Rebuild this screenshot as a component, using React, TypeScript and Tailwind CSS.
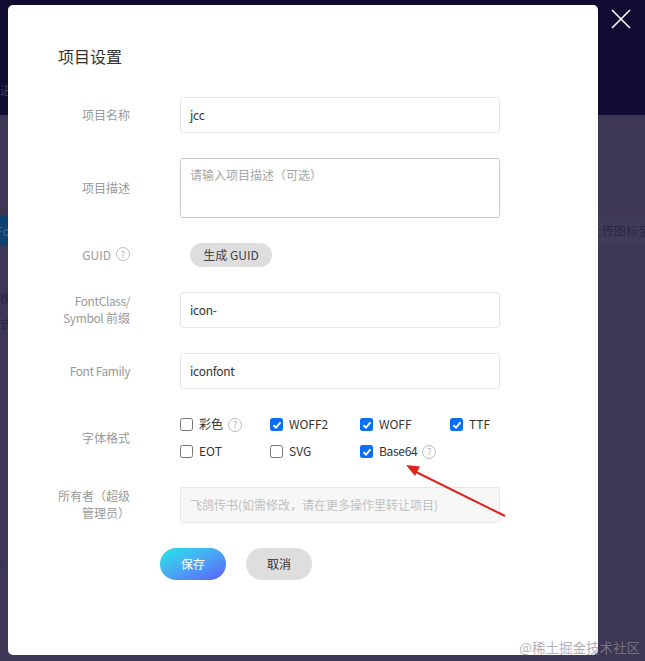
const font = "font-['Noto_Sans_CJK_SC','Noto_Sans',sans-serif]";

function Help() {
  return (
    <span className="inline-flex h-[14px] w-[14px] items-center justify-center rounded-full border border-[#bbbbbb] text-[9px] leading-none text-[#aaaaaa]">
      ?
    </span>
  );
}

function Check({ label, checked, help, tight }: { label: string; checked?: boolean; help?: boolean; tight?: boolean }) {
  return (
    <div className="flex h-[27px] items-center">
      {checked ? (
        <span className="flex h-[13px] w-[13px] items-center justify-center rounded-[2.5px] bg-[#0b6ff5]">
          <svg width="10" height="10" viewBox="0 0 10 10" fill="none">
            <path d="M1.5 5.2 L4 7.6 L8.5 2.4" stroke="#ffffff" strokeWidth="1.9" />
          </svg>
        </span>
      ) : (
        <span className="h-[13px] w-[13px] rounded-[2.5px] border border-[#767676] bg-white" />
      )}
      <span className={`ml-[6px] pb-[2px] text-[12px] text-[#333333] ${tight ? "tracking-[-0.3px]" : ""}`}>{label}</span>
      {help && (
        <span className="ml-[5px] flex">
          <Help />
        </span>
      )}
    </div>
  );
}

function Row({ label, children }: { label: React.ReactNode; children: React.ReactNode }) {
  return (
    <div className="flex items-center">
      <div className="w-[72px] shrink-0 pb-[2px] text-right text-[12px] leading-[17px] text-[#999999]">{label}</div>
      <div className="ml-[50px] w-[320px]">{children}</div>
    </div>
  );
}

function Input({ value }: { value: string }) {
  return (
    <div className="flex h-[36px] items-center rounded-[3px] border border-[#e6e6e6] bg-white px-[9px] text-[12px] tracking-[-0.25px] text-[#333333]">
      {value}
    </div>
  );
}

export default function App() {
  return (
    <div className={`${font} relative h-[661px] w-[645px] overflow-hidden bg-[#3d3755]`}>
      <div className="h-[115px] bg-[#100b30]">
        <div className="pt-[81px] text-[12px] text-[#3f3a5c]">进</div>
      </div>
      <div className="mt-[100px] flex h-[31px] items-center justify-between bg-[#0d4170]">
        <span className="-ml-[4px] text-[12px] text-[#3a6d90]">Fo</span>
        <span className="-mr-[5px] flex h-full items-center bg-[#413b5a] pl-[14px] text-[12px] whitespace-nowrap text-[#2b2644]">
          上传图标至
        </span>
      </div>
      <div className="pt-[39px] text-[12px] leading-[26px] text-[#2b2644]">
        <div>模</div>
        <div>式</div>
        <div className="mt-[214px] -ml-[3px]">&lt;</div>
      </div>

      {/* close */}
      <svg className="absolute left-[611px] top-[9px]" width="20" height="20" viewBox="0 0 20 20" fill="none">
        <path d="M1 1 L19 19 M19 1 L1 19" stroke="#ffffff" strokeWidth="1.6" />
      </svg>

      {/* modal */}
      <div className="absolute left-[8px] top-[5px] flex h-[650px] w-[590px] flex-col rounded-[5px] bg-white pl-[50px] pt-[40px]">
        <h2 className="h-[52px] text-[16px] leading-[23px] font-normal text-[#333333]">项目设置</h2>
        <div className="flex flex-col gap-[25px]">
          <Row label="项目名称">
            <Input value="jcc" />
          </Row>
          <Row label="项目描述">
            <div className="h-[60px] rounded-[3px] border border-[#c8c8c8] bg-white px-[9px] pt-[6px] text-[12px] leading-[20px] text-[#a6a6a6]">
              请输入项目描述（可选）
            </div>
          </Row>
          <Row
            label={
              <span className="flex items-center justify-end gap-[5px]">
                GUID <Help />
              </span>
            }
          >
            <div className="ml-[10px] flex h-[24px] w-[82px] items-center justify-center rounded-full bg-[#dedede] text-[12px] text-[#444444]">
              生成 GUID
            </div>
          </Row>
          <Row
            label={
              <>
                <span className="tracking-[-0.4px]">FontClass/ Symbol</span> 前缀
              </>
            }
          >
            <Input value="icon-" />
          </Row>
          <Row label={<span className="tracking-[-0.45px]">Font Family</span>}>
            <Input value="iconfont" />
          </Row>
          <Row label="字体格式">
            <div className="grid h-[48px] grid-cols-[90px_90px_90px_50px] content-center">
              <Check label="彩色" help />
              <Check label="WOFF2" checked />
              <Check label="WOFF" checked />
              <Check label="TTF" checked />
              <Check label="EOT" />
              <Check label="SVG" />
              <Check label="Base64" checked help tight />
            </div>
          </Row>
          <Row label="所有者（超级管理员）">
            <div className="flex h-[36px] items-center rounded-[3px] border border-[#e6e6e6] bg-[#f7f7f7] px-[9px] text-[12px] whitespace-nowrap text-[#c0c0c0]">
              飞鸽传书(如需修改，请在更多操作里转让项目)
            </div>
          </Row>
          <div className="ml-[102px] flex gap-[20px]">
            <button className="h-[32px] w-[66px] rounded-full bg-gradient-to-br from-[#10e6e8] to-[#5a5cf8] text-[12px] text-white">
              保存
            </button>
            <button className="h-[32px] w-[66px] rounded-full bg-[#dedede] text-[12px] text-[#333333]">取消</button>
          </div>
        </div>
      </div>

      {/* annotation arrow */}
      <svg className="absolute left-[400px] top-[460px]" width="110" height="62" viewBox="0 0 110 62" fill="none">
        <path d="M105 56 L14 11" stroke="#e0231c" strokeWidth="2" />
        <path d="M6 5 L20 6.5 L15 16 Z" fill="#e0231c" />
      </svg>

      {/* watermark */}
      <div className="absolute right-[5px] top-[637px] text-[13.5px] leading-[20px] whitespace-nowrap text-[#8f8c9c]/70">
        @稀土掘金技术社区
      </div>
    </div>
  );
}
